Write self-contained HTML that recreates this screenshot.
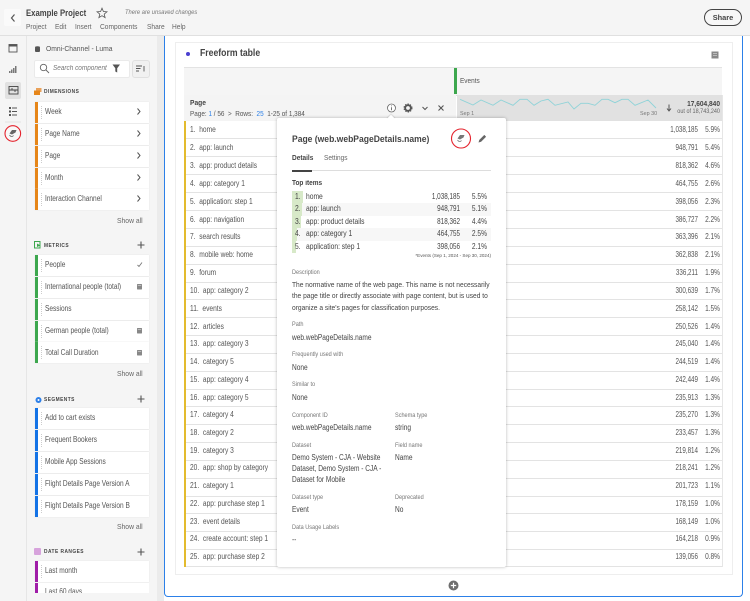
<!DOCTYPE html>
<html><head><meta charset="utf-8"><style>
html,body{margin:0;padding:0;width:750px;height:601px;overflow:hidden;background:#fff}
body{font-family:"Liberation Sans",sans-serif;color:#4b4b4b}
#w{position:relative;width:750px;height:601px;overflow:hidden;filter:blur(.3px)}
.a{position:absolute}
.t{position:absolute;white-space:nowrap;line-height:12px;height:12px;transform-origin:0 50%}
.r{text-align:right;transform-origin:100% 50%!important}
.n{font-size:7.8px;color:#555;left:190px;transform:scaleX(.85)}
.v{font-size:7.8px;color:#555;width:70px;left:628px;text-align:right;transform:scaleX(.8);transform-origin:100% 50%}
.p{font-size:7.8px;color:#555;width:30px;left:690px;text-align:right;transform:scaleX(.84);transform-origin:100% 50%}
.rl{position:absolute;left:186px;width:536px;height:1px;background:#e3e3e3}
.si{position:absolute;left:35px;width:114px;height:21px;background:#fff;box-shadow:0 0 1px #ddd}
.si i{position:absolute;left:0;top:0;bottom:0;width:3px}
.si u{position:absolute;left:6px;top:4px;height:13px;border-left:1px dotted #ccc}
.st{position:absolute;white-space:nowrap;line-height:12px;font-size:7.9px;color:#555;left:45px;transform:scaleX(.83);transform-origin:0 50%}
.h{position:absolute;white-space:nowrap;line-height:12px;font-size:5.7px;font-weight:bold;letter-spacing:.55px;color:#444;left:44px;transform:scaleX(.85);transform-origin:0 50%}
.sa{position:absolute;white-space:nowrap;line-height:12px;font-size:7.3px;color:#666;left:117px;transform:scaleX(.93);transform-origin:0 50%}
.l{position:absolute;white-space:nowrap;line-height:12px;font-size:6.1px;color:#777;transform:scaleX(.91);transform-origin:0 50%}
.d{position:absolute;white-space:nowrap;line-height:12px;font-size:8px;color:#444;transform:scaleX(.82);transform-origin:0 50%}
.ti{position:absolute;white-space:nowrap;line-height:12px;font-size:7.9px;color:#444;transform:scaleX(.85);transform-origin:0 50%}
.tv{position:absolute;white-space:nowrap;line-height:12px;font-size:7.9px;color:#444;text-align:right;transform:scaleX(.8);transform-origin:100% 50%;left:410px;width:50px}
.tp{position:absolute;white-space:nowrap;line-height:12px;font-size:7.9px;color:#444;text-align:right;transform:scaleX(.84);transform-origin:100% 50%;left:457px;width:30px}
.m{position:absolute;white-space:nowrap;line-height:12px;font-size:7.6px;color:#666;top:21px;transform:scaleX(.87);transform-origin:0 50%}
</style></head><body><div id="w">

<!-- top bar -->
<div class="a" style="left:0;top:0;width:750px;height:35px;background:#f5f5f5;border-bottom:1px solid #e0e0e0"></div>
<div class="a" style="left:4px;top:9px;width:17px;height:17px;background:#fafafa;border-radius:2px"></div>
<svg class="a" style="left:9px;top:13px" width="8" height="10"><path d="M5.500 1.500 2.500 5l3 3.500" fill="none" stroke="#555" stroke-width="1.200"/></svg>
<div class="t" style="left:26px;top:7px;font-size:8.800px;font-weight:bold;color:#444;transform:scaleX(.88)">Example Project</div>
<svg class="a" style="left:96px;top:7px" width="12" height="12" viewBox="0 0 12 12"><path d="M6 1.200 7.400 4.500l3.600.3-2.800 2.300.9 3.500L6 8.700 2.900 10.600l.9-3.500L1 4.800l3.600-.3z" fill="none" stroke="#555" stroke-width=".8"/></svg>
<div class="t" style="left:125px;top:7px;font-size:6.600px;font-style:italic;color:#777;transform:scaleX(.88)">There are unsaved changes</div>
<div class="m" style="left:26px">Project</div>
<div class="m" style="left:55px">Edit</div>
<div class="m" style="left:75px">Insert</div>
<div class="m" style="left:100px">Components</div>
<div class="m" style="left:147px">Share</div>
<div class="m" style="left:172px">Help</div>
<div class="a" style="left:704px;top:9px;width:36px;height:15px;border:1.200px solid #444;border-radius:9px;background:#f7f7f7;text-align:center;font-size:7.400px;line-height:15px;font-weight:bold;color:#444">Share</div>

<!-- left rail + panel -->
<div class="a" style="left:0;top:36px;width:26px;height:565px;background:#f5f5f5;border-right:1px solid #e6e6e6"></div>
<div class="a" style="left:27px;top:36px;width:130px;height:565px;background:#f5f5f5"></div>
<div class="a" style="left:157px;top:36px;width:7px;height:565px;background:#ebebeb"></div>
<svg class="a" style="left:0;top:36px" width="26" height="120" viewBox="0 36 26 120">
<rect x="9" y="44.500" width="8" height="7.500" fill="none" stroke="#555" stroke-width=".9"/><rect x="9" y="44.500" width="8" height="2" fill="#555"/>
<path d="M9 73h1.500v-2H9zM11 73h1.500v-3.500H11zM13 73h1.500v-5H13zM15 73h1.500v-7H15z" fill="#777"/>
<rect x="5" y="82" width="16" height="17" rx="2" fill="#e1e1e1"/>
<rect x="9" y="86.500" width="9" height="7.500" fill="none" stroke="#444" stroke-width=".9"/><path d="M9 90h9M12 88v2M15 90v2" stroke="#444" stroke-width=".9"/>
<path d="M9 107h2v2H9zM9 110.500h2v2H9zM9 114h2v2H9z" fill="#555"/><path d="M12 108h5M12 111.500h5M12 115h5" stroke="#555" stroke-width="1"/>
<path d="M5 122h16" stroke="#e4e4e4"/>
<circle cx="12.800" cy="133.500" r="7.800" fill="#f8f8f8" stroke="#e4232d" stroke-width="1.100"/>
<path d="M9.500 133.500 12 130h4.500l-1 2.500-3.500 2z" fill="#666"/><path d="M9.500 135c1 1.800 3 2 4 .5" fill="none" stroke="#666" stroke-width=".8"/>
</svg>

<!-- sidebar -->
<svg class="a" style="left:34px;top:46px" width="7" height="7"><ellipse cx="3.500" cy="1.500" rx="2.500" ry="1.200" fill="#555"/><rect x="1" y="1.500" width="5" height="4.500" rx="1" fill="#555"/></svg>
<div class="t" style="left:46px;top:43px;font-size:7.600px;color:#555;transform:scaleX(.89)">Omni-Channel - Luma</div>
<div class="a" style="left:34px;top:60px;width:94px;height:16px;background:#fff;border:1px solid #eaeaea;border-radius:2px"></div>
<svg class="a" style="left:39px;top:63px" width="11" height="11"><circle cx="4.500" cy="4.500" r="3.200" fill="none" stroke="#666" stroke-width=".9"/><path d="M7 7l3 3" stroke="#666" stroke-width=".9"/></svg>
<div class="t" style="left:53px;top:63px;font-size:6.900px;font-style:italic;color:#777;transform:scaleX(.93)">Search component</div>
<svg class="a" style="left:112px;top:64px" width="9" height="9"><path d="M.5.500h7.500L5.200 4.200V8.500L3.300 7.500V4.200z" fill="#555"/></svg>
<div class="a" style="left:132px;top:60px;width:16px;height:16px;background:#f1f1f1;border:1px solid #e0e0e0;border-radius:3px"></div>
<svg class="a" style="left:136px;top:65px" width="10" height="8"><path d="M0 1h6M0 3.500h4.500M0 6h3M8 1v5.500" stroke="#555" stroke-width=".9"/></svg>

<svg class="a" style="left:34px;top:88px" width="8" height="8"><rect x="2" y="0" width="5.500" height="4" fill="#e9a15a"/><rect x="0" y="2.500" width="6" height="4.500" fill="#e68619"/></svg>
<div class="h" style="top:86px">DIMENSIONS</div>
<div class="si" style="top:102px"><i style="background:#e68619"></i><u></u></div>
<div class="si" style="top:124px"><i style="background:#e68619"></i><u></u></div>
<div class="si" style="top:146px"><i style="background:#e68619"></i><u></u></div>
<div class="si" style="top:168px"><i style="background:#e68619"></i><u></u></div>
<div class="si" style="top:189px"><i style="background:#e68619"></i><u></u></div>
<div class="st" style="top:106px">Week</div>
<div class="st" style="top:128px">Page Name</div>
<div class="st" style="top:150px">Page</div>
<div class="st" style="top:172px">Month</div>
<div class="st" style="top:193px">Interaction Channel</div>
<svg class="a" style="left:136px;top:106px" width="6" height="100" viewBox="0 0 6 100" fill="none" stroke="#555" stroke-width="1"><path d="M1.500 2.500 4 5.500 1.500 8.500M1.500 24.500 4 27.500 1.500 30.500M1.500 46.500 4 49.500 1.500 52.500M1.500 68.500 4 71.500 1.500 74.500M1.500 89.500 4 92.500 1.500 95.500"/></svg>
<div class="sa" style="top:215px">Show all</div>

<svg class="a" style="left:34px;top:241px" width="8" height="8"><rect x=".5" y=".5" width="5.500" height="6.500" fill="none" stroke="#3da74e"/><path d="M3 2.500 6.500 4.500 3 6z" fill="#3da74e"/></svg>
<div class="h" style="top:240px">METRICS</div>
<svg class="a" style="left:137px;top:241px" width="8" height="8"><path d="M4 .5v7M.5 4h7" stroke="#555" stroke-width="1.100"/></svg>
<div class="si" style="top:255px"><i style="background:#3da74e"></i><u></u></div>
<div class="si" style="top:277px"><i style="background:#3da74e"></i><u></u></div>
<div class="si" style="top:299px"><i style="background:#3da74e"></i><u></u></div>
<div class="si" style="top:321px"><i style="background:#3da74e"></i><u></u></div>
<div class="si" style="top:342px;height:21px"><i style="background:#3da74e"></i><u></u></div>
<div class="st" style="top:259px">People</div>
<div class="st" style="top:281px">International people (total)</div>
<div class="st" style="top:303px">Sessions</div>
<div class="st" style="top:325px">German people (total)</div>
<div class="st" style="top:347px">Total Call Duration</div>
<svg class="a" style="left:136px;top:260px" width="7" height="100" viewBox="0 0 7 100"><path d="M1.500 5 3 6.500 6 2.500" fill="none" stroke="#777" stroke-width=".9"/><rect x="1" y="24" width="5" height="5.500" rx=".6" fill="#888"/><rect x="1" y="68" width="5" height="5.500" rx=".6" fill="#888"/><rect x="1" y="90" width="5" height="5.500" rx=".6" fill="#888"/><path d="M1.800 25.500h3.400M1.800 69.500h3.400M1.800 91.500h3.400" stroke="#eee" stroke-width=".6"/></svg>
<div class="sa" style="top:368px">Show all</div>

<svg class="a" style="left:35px;top:396px" width="7" height="8"><circle cx="3.500" cy="4" r="3" fill="#2c7fe8"/><circle cx="3.500" cy="4" r="1" fill="#fff"/></svg>
<div class="h" style="top:394px">SEGMENTS</div>
<svg class="a" style="left:137px;top:395px" width="8" height="8"><path d="M4 .5v7M.5 4h7" stroke="#555" stroke-width="1.100"/></svg>
<div class="si" style="top:408px"><i style="background:#1473e6"></i><u></u></div>
<div class="si" style="top:430px"><i style="background:#1473e6"></i><u></u></div>
<div class="si" style="top:452px"><i style="background:#1473e6"></i><u></u></div>
<div class="si" style="top:474px"><i style="background:#1473e6"></i><u></u></div>
<div class="si" style="top:496px"><i style="background:#1473e6"></i><u></u></div>
<div class="st" style="top:412px">Add to cart exists</div>
<div class="st" style="top:434px">Frequent Bookers</div>
<div class="st" style="top:456px">Mobile App Sessions</div>
<div class="st" style="top:478px">Flight Details Page Version A</div>
<div class="st" style="top:500px">Flight Details Page Version B</div>
<div class="sa" style="top:521px">Show all</div>

<div class="a" style="left:34px;top:548px;width:7px;height:7px;background:#d7a3dc;border-radius:1px"></div>
<div class="h" style="top:546px">DATE RANGES</div>
<svg class="a" style="left:137px;top:548px" width="8" height="8"><path d="M4 .5v7M.5 4h7" stroke="#555" stroke-width="1.100"/></svg>
<div class="si" style="top:561px"><i style="background:#a01da8"></i><u></u></div>
<div class="st" style="top:565px">Last month</div>
<div class="a" style="left:35px;top:583px;width:114px;height:10px;overflow:hidden;background:#fff"><div style="position:absolute;left:0;top:0;bottom:0;width:3px;background:#a01da8"></div><div style="position:absolute;left:10px;top:3px;font-size:7.900px;line-height:12px;color:#555;transform:scaleX(.83);transform-origin:0 50%;white-space:nowrap">Last 60 days</div></div>
<div class="a" style="left:27px;top:593px;width:130px;height:8px;background:#f5f5f5"></div>

<!-- workspace -->
<div class="a" style="left:164px;top:36px;width:577px;height:560px;border:1.200px solid #2c80e8;border-top:none;border-radius:0 0 4px 4px;background:#fff;box-sizing:content-box"></div>
<div class="a" style="left:175px;top:42px;width:556px;height:531px;border:1px solid #eee;background:#fff"></div>
<div class="a" style="left:186px;top:52px;width:4px;height:4px;border-radius:50%;background:#4a3fd0"></div>
<div class="t" style="left:200px;top:48px;font-size:10.200px;font-weight:bold;color:#444;transform:scaleX(.85)">Freeform table</div>
<svg class="a" style="left:711px;top:51px" width="8" height="8"><rect x=".5" y=".5" width="7" height="7" fill="#888"/><path d="M2 2.500h4M2 4.500h4" stroke="#eee" stroke-width=".6"/></svg>

<!-- table -->
<div class="a" style="left:184px;top:67px;width:538px;height:27px;background:#f5f5f5;border-top:1px solid #e3e3e3;border-bottom:1px solid #e0e0e0"></div>
<div class="a" style="left:454px;top:68px;width:3px;height:26px;background:#3da74e"></div>
<div class="t" style="left:460px;top:75px;font-size:7.600px;color:#555;transform:scaleX(.85)">Events</div>
<div class="a" style="left:184px;top:95px;width:272px;height:26px;background:#f4f4f4"></div>
<div class="a" style="left:457px;top:95px;width:265px;height:26px;background:#e1e1e1"></div>
<div class="a" style="left:184px;top:121px;width:2px;height:446px;background:#e3bb2e"></div>
<div class="t" style="left:190px;top:97px;font-size:7.600px;font-weight:bold;color:#444;transform:scaleX(.88)">Page</div>
<div class="t" style="left:190px;top:108px;font-size:7.100px;color:#555;transform:scaleX(.9)">Page: <span style="color:#2c80e8">1</span> / 56 &nbsp;&gt;&nbsp; Rows: &nbsp;<span style="color:#2c80e8">25</span> &nbsp;1-25 of 1,384</div>
<svg class="a" style="left:386px;top:102px" width="60" height="12" viewBox="0 0 60 12">
<circle cx="5.500" cy="6" r="4" fill="#fff" stroke="#666" stroke-width=".8"/><path d="M5.500 3.500v.8M5.500 5.200v3" stroke="#666" stroke-width=".9"/>
<circle cx="22" cy="6" r="2.800" fill="none" stroke="#555" stroke-width="1.800"/><circle cx="22" cy="6" r="4" fill="none" stroke="#555" stroke-width="1" stroke-dasharray="1.400 1.200"/>
<path d="M36.500 5 39 7.500 41.500 5" fill="none" stroke="#555" stroke-width="1"/>
<path d="M52.500 3.500 57.500 8.500M57.500 3.500 52.500 8.500" stroke="#555" stroke-width="1.100"/>
</svg>
<svg class="a" style="left:459px;top:97px" width="200" height="14" viewBox="459 97 200 14"><polyline points="460,99.300 473,105 481,100 493,105.300 501,100 513,105.300 520,99.300 527,99.300 534,105.300 541,101 548,99.300 555,105.300 568,102 574,109 581,103.300 588,103.300 595,105.300 602,99.300 608,99.300 615,102.700 622,99.300 628,99.300 635,105.300 648,100 656,108" fill="none" stroke="#8fd3d8" stroke-width=".9"/></svg>
<div class="t" style="left:460px;top:108px;font-size:5.400px;color:#777">Sep 1</div>
<div class="t" style="left:640px;top:108px;font-size:5.400px;color:#777">Sep 30</div>
<svg class="a" style="left:665px;top:103px" width="8" height="10"><path d="M4 1.500v6M2 5.500 4 8l2-2.500" fill="none" stroke="#555" stroke-width="1"/></svg>
<div class="t r" style="left:660px;width:60px;top:98px;font-size:7.300px;font-weight:bold;color:#444;transform:scaleX(.9)">17,604,840</div>
<div class="t r" style="left:660px;width:60px;top:106px;font-size:6.100px;color:#666;transform:scaleX(.9)">out of 18,743,240</div>

<!-- table rows -->
<div class="rl" style="top:138px"></div><div class="rl" style="top:156px"></div><div class="rl" style="top:174px"></div><div class="rl" style="top:192px"></div><div class="rl" style="top:210px"></div><div class="rl" style="top:228px"></div><div class="rl" style="top:246px"></div><div class="rl" style="top:264px"></div><div class="rl" style="top:282px"></div><div class="rl" style="top:299px"></div><div class="rl" style="top:317px"></div><div class="rl" style="top:335px"></div><div class="rl" style="top:353px"></div><div class="rl" style="top:371px"></div><div class="rl" style="top:389px"></div><div class="rl" style="top:406px"></div><div class="rl" style="top:424px"></div><div class="rl" style="top:442px"></div><div class="rl" style="top:460px"></div><div class="rl" style="top:478px"></div><div class="rl" style="top:496px"></div><div class="rl" style="top:513px"></div><div class="rl" style="top:531px"></div><div class="rl" style="top:549px"></div><div class="rl" style="top:566px"></div>
<div class="a" style="left:722px;top:95px;width:1px;height:472px;background:#e6e6e6"></div>

<div class="t n" style="top:124px">1. &nbsp;home</div><div class="t v" style="top:124px">1,038,185</div><div class="t p" style="top:124px">5.9%</div>
<div class="t n" style="top:142px">2. &nbsp;app: launch</div><div class="t v" style="top:142px">948,791</div><div class="t p" style="top:142px">5.4%</div>
<div class="t n" style="top:160px">3. &nbsp;app: product details</div><div class="t v" style="top:160px">818,362</div><div class="t p" style="top:160px">4.6%</div>
<div class="t n" style="top:178px">4. &nbsp;app: category 1</div><div class="t v" style="top:178px">464,755</div><div class="t p" style="top:178px">2.6%</div>
<div class="t n" style="top:196px">5. &nbsp;application: step 1</div><div class="t v" style="top:196px">398,056</div><div class="t p" style="top:196px">2.3%</div>
<div class="t n" style="top:214px">6. &nbsp;app: navigation</div><div class="t v" style="top:214px">386,727</div><div class="t p" style="top:214px">2.2%</div>
<div class="t n" style="top:231px">7. &nbsp;search results</div><div class="t v" style="top:231px">363,396</div><div class="t p" style="top:231px">2.1%</div>
<div class="t n" style="top:249px">8. &nbsp;mobile web: home</div><div class="t v" style="top:249px">362,838</div><div class="t p" style="top:249px">2.1%</div>
<div class="t n" style="top:267px">9. &nbsp;forum</div><div class="t v" style="top:267px">336,211</div><div class="t p" style="top:267px">1.9%</div>
<div class="t n" style="top:285px">10. &nbsp;app: category 2</div><div class="t v" style="top:285px">300,639</div><div class="t p" style="top:285px">1.7%</div>
<div class="t n" style="top:303px">11. &nbsp;events</div><div class="t v" style="top:303px">258,142</div><div class="t p" style="top:303px">1.5%</div>
<div class="t n" style="top:321px">12. &nbsp;articles</div><div class="t v" style="top:321px">250,526</div><div class="t p" style="top:321px">1.4%</div>
<div class="t n" style="top:338px">13. &nbsp;app: category 3</div><div class="t v" style="top:338px">245,040</div><div class="t p" style="top:338px">1.4%</div>
<div class="t n" style="top:356px">14. &nbsp;category 5</div><div class="t v" style="top:356px">244,519</div><div class="t p" style="top:356px">1.4%</div>
<div class="t n" style="top:374px">15. &nbsp;app: category 4</div><div class="t v" style="top:374px">242,449</div><div class="t p" style="top:374px">1.4%</div>
<div class="t n" style="top:392px">16. &nbsp;app: category 5</div><div class="t v" style="top:392px">235,913</div><div class="t p" style="top:392px">1.3%</div>
<div class="t n" style="top:409px">17. &nbsp;category 4</div><div class="t v" style="top:409px">235,270</div><div class="t p" style="top:409px">1.3%</div>
<div class="t n" style="top:427px">18. &nbsp;category 2</div><div class="t v" style="top:427px">233,457</div><div class="t p" style="top:427px">1.3%</div>
<div class="t n" style="top:445px">19. &nbsp;category 3</div><div class="t v" style="top:445px">219,814</div><div class="t p" style="top:445px">1.2%</div>
<div class="t n" style="top:462px">20. &nbsp;app: shop by category</div><div class="t v" style="top:462px">218,241</div><div class="t p" style="top:462px">1.2%</div>
<div class="t n" style="top:480px">21. &nbsp;category 1</div><div class="t v" style="top:480px">201,723</div><div class="t p" style="top:480px">1.1%</div>
<div class="t n" style="top:498px">22. &nbsp;app: purchase step 1</div><div class="t v" style="top:498px">178,159</div><div class="t p" style="top:498px">1.0%</div>
<div class="t n" style="top:516px">23. &nbsp;event details</div><div class="t v" style="top:516px">168,149</div><div class="t p" style="top:516px">1.0%</div>
<div class="t n" style="top:533px">24. &nbsp;create account: step 1</div><div class="t v" style="top:533px">164,218</div><div class="t p" style="top:533px">0.9%</div>
<div class="t n" style="top:551px">25. &nbsp;app: purchase step 2</div><div class="t v" style="top:551px">139,056</div><div class="t p" style="top:551px">0.8%</div>

<svg class="a" style="left:448px;top:580px" width="11" height="11"><circle cx="5.500" cy="5.500" r="5" fill="#6e6e6e"/><path d="M5.500 2.800v5.400M2.800 5.500h5.400" stroke="#fff" stroke-width="1.200"/></svg>

<!-- popover -->
<div class="a" style="left:277px;top:118px;width:229px;height:449px;background:#fff;border-radius:2px;box-shadow:0 0 3px rgba(0,0,0,.28)"></div>
<div class="a" style="left:388px;top:115.500px;width:6px;height:6px;background:#fff;transform:rotate(45deg);box-shadow:-1px -1px 1px rgba(0,0,0,.1)"></div>
<div class="t" style="left:292px;top:134px;font-size:9.500px;font-weight:bold;color:#444;transform:scaleX(.9)">Page (web.webPageDetails.name)</div>
<svg class="a" style="left:449px;top:127px" width="45" height="22" viewBox="449 127 45 22">
<circle cx="461" cy="138.500" r="9.500" fill="#fff" stroke="#e4232d" stroke-width="1.100"/>
<path d="M457.500 138.500 460 135h4.500l-1 2.500-3.500 2z" fill="#777"/><path d="M457.500 140c1 1.800 3 2 4 .5" fill="none" stroke="#777" stroke-width=".8"/>
<path d="M478.500 142.500l.8-2.600 5-5 1.800 1.800-5 5z" fill="#666"/>
</svg>
<div class="t" style="left:292px;top:152px;font-size:7.400px;font-weight:bold;color:#444;transform:scaleX(.88)">Details</div>
<div class="t" style="left:324px;top:152px;font-size:7.400px;color:#666;transform:scaleX(.88)">Settings</div>
<div class="a" style="left:292px;top:170px;width:199px;height:1px;background:#ddd"></div>
<div class="a" style="left:292px;top:170px;width:20px;height:1.500px;background:#444"></div>
<div class="t" style="left:292px;top:178px;font-size:6.900px;font-weight:bold;color:#444;transform:scaleX(.94)">Top items</div>

<div class="a" style="left:292px;top:203px;width:199px;height:12.500px;background:#f7f7f7"></div>
<div class="a" style="left:292px;top:228px;width:199px;height:12.500px;background:#f7f7f7"></div>
<div class="a" style="left:292px;top:190.500px;width:11px;height:12.500px;background:#d7e9c8"></div>
<div class="a" style="left:292px;top:203px;width:10px;height:12.500px;background:#d7e9c8"></div>
<div class="a" style="left:292px;top:215.500px;width:8.500px;height:12.500px;background:#d7e9c8"></div>
<div class="a" style="left:292px;top:228px;width:5px;height:12.500px;background:#d7e9c8"></div>
<div class="a" style="left:292px;top:240.500px;width:4px;height:12.500px;background:#d7e9c8"></div>
<div class="ti" style="left:295px;top:191px">1.</div><div class="ti" style="left:306px;top:191px">home</div><div class="tv" style="top:191px">1,038,185</div><div class="tp" style="top:191px">5.5%</div>
<div class="ti" style="left:295px;top:203px">2.</div><div class="ti" style="left:306px;top:203px">app: launch</div><div class="tv" style="top:203px">948,791</div><div class="tp" style="top:203px">5.1%</div>
<div class="ti" style="left:295px;top:216px">3.</div><div class="ti" style="left:306px;top:216px">app: product details</div><div class="tv" style="top:216px">818,362</div><div class="tp" style="top:216px">4.4%</div>
<div class="ti" style="left:295px;top:228px">4.</div><div class="ti" style="left:306px;top:228px">app: category 1</div><div class="tv" style="top:228px">464,755</div><div class="tp" style="top:228px">2.5%</div>
<div class="ti" style="left:295px;top:241px">5.</div><div class="ti" style="left:306px;top:241px">application: step 1</div><div class="tv" style="top:241px">398,056</div><div class="tp" style="top:241px">2.1%</div>
<div class="t r" style="left:391px;width:100px;top:251px;font-size:4.900px;color:#555;transform:scaleX(.93)">*Events (Sep 1, 2024 - Sep 30, 2024)</div>

<div class="l" style="left:292px;top:267px">Description</div>
<div class="d" style="left:292px;top:279px;font-size:7.650px;transform:scaleX(.87)">The normative name of the web page. This name is not necessarily</div>
<div class="d" style="left:292px;top:290px;font-size:7.650px;transform:scaleX(.87)">the page title or directly associate with page content, but is used to</div>
<div class="d" style="left:292px;top:302px;font-size:7.650px;transform:scaleX(.87)">organize a site's pages for classification purposes.</div>
<div class="l" style="left:292px;top:319px">Path</div>
<div class="d" style="left:292px;top:332px">web.webPageDetails.name</div>
<div class="l" style="left:292px;top:349px">Frequently used with</div>
<div class="d" style="left:292px;top:362px">None</div>
<div class="l" style="left:292px;top:379px">Similar to</div>
<div class="d" style="left:292px;top:392px">None</div>
<div class="l" style="left:292px;top:410px">Component ID</div>
<div class="d" style="left:292px;top:422px">web.webPageDetails.name</div>
<div class="l" style="left:395px;top:410px">Schema type</div>
<div class="d" style="left:395px;top:422px">string</div>
<div class="l" style="left:292px;top:440px">Dataset</div>
<div class="d" style="left:292px;top:452px">Demo System - CJA - Website</div>
<div class="d" style="left:292px;top:463px">Dataset, Demo System - CJA -</div>
<div class="d" style="left:292px;top:474px">Dataset for Mobile</div>
<div class="l" style="left:395px;top:440px">Field name</div>
<div class="d" style="left:395px;top:452px">Name</div>
<div class="l" style="left:292px;top:492px">Dataset type</div>
<div class="d" style="left:292px;top:504px">Event</div>
<div class="l" style="left:395px;top:492px">Deprecated</div>
<div class="d" style="left:395px;top:504px">No</div>
<div class="l" style="left:292px;top:522px">Data Usage Labels</div>
<div class="d" style="left:292px;top:534px">--</div>

</div></body></html>
